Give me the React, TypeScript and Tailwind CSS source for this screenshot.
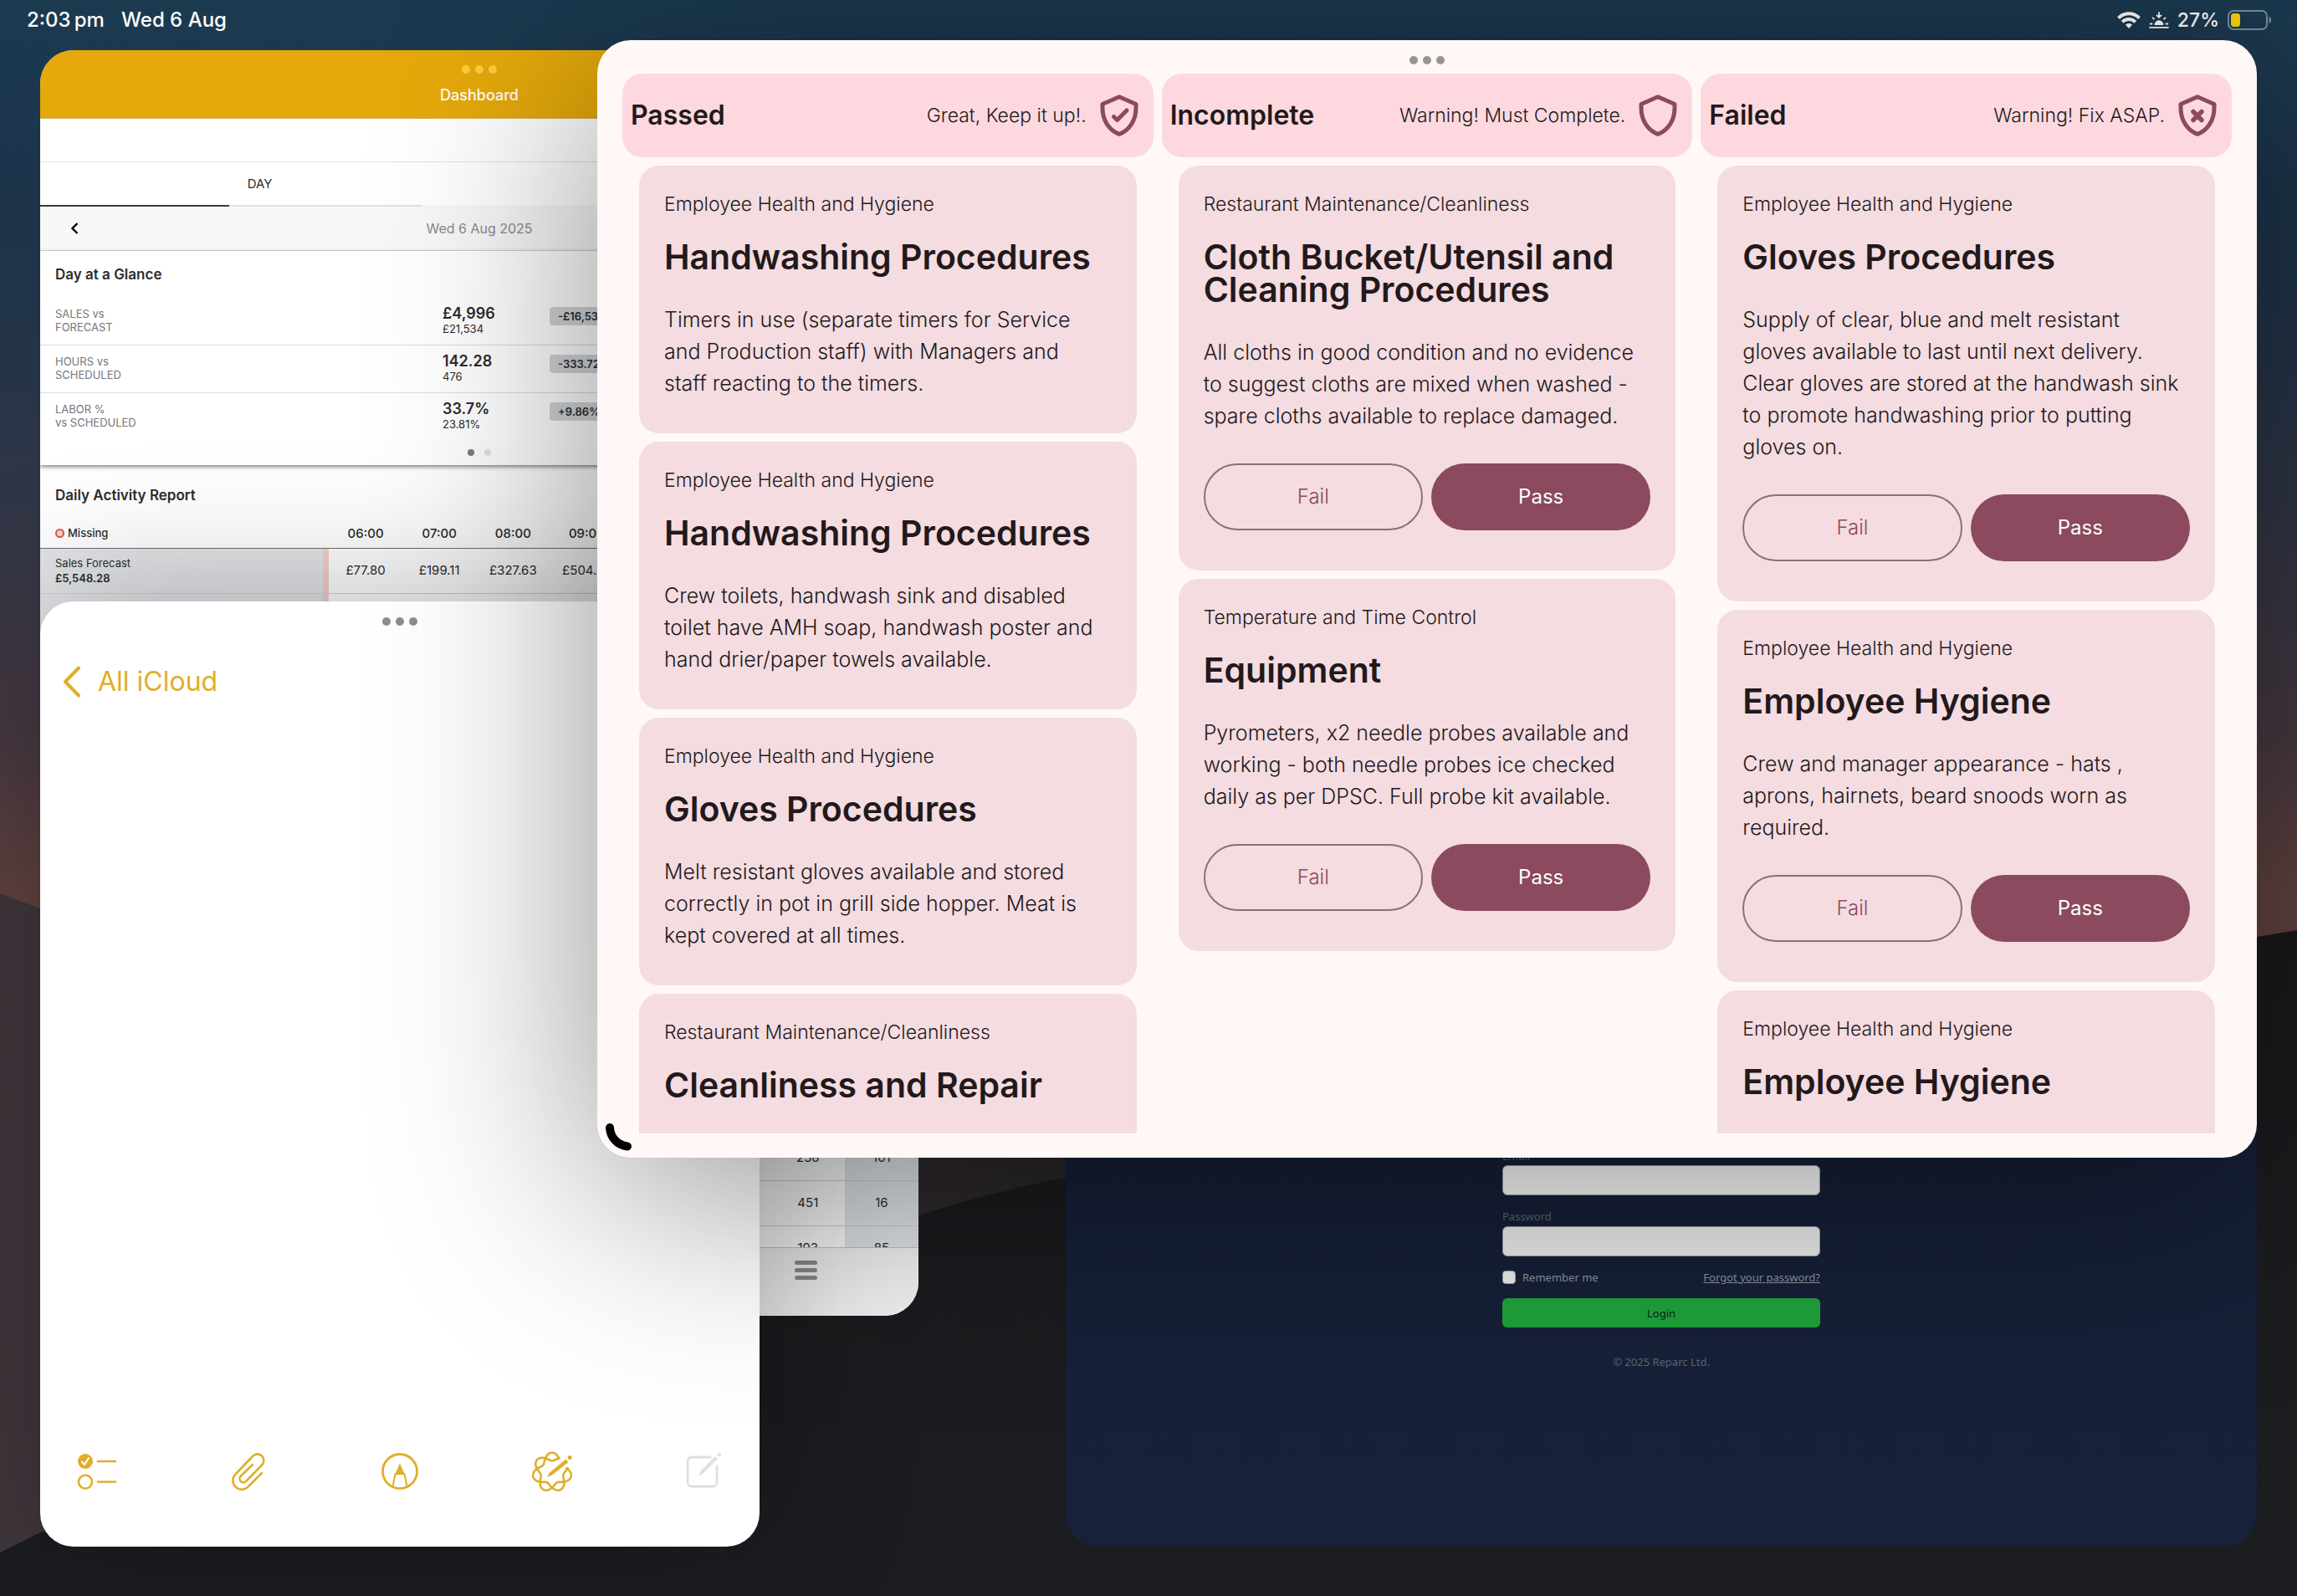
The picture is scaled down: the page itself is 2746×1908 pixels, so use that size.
import React from "react";

type Task = { area: string; title: string; body: string };
type ColumnData = {
  name: string;
  note: string;
  mark: "check" | "none" | "cross";
  actions: boolean;
  tasks: Task[];
};

const columns: ColumnData[] = [
  {
    name: "Passed",
    note: "Great, Keep it up!.",
    mark: "check",
    actions: false,
    tasks: [
      {
        area: "Employee Health and Hygiene",
        title: "Handwashing Procedures",
        body: "Timers in use (separate timers for Service\nand Production staff) with Managers and\nstaff reacting to the timers.",
      },
      {
        area: "Employee Health and Hygiene",
        title: "Handwashing Procedures",
        body: "Crew toilets, handwash sink and disabled\ntoilet have AMH soap, handwash poster and\nhand drier/paper towels available.",
      },
      {
        area: "Employee Health and Hygiene",
        title: "Gloves Procedures",
        body: "Melt resistant gloves available and stored\ncorrectly in pot in grill side hopper. Meat is\nkept covered at all times.",
      },
      {
        area: "Restaurant Maintenance/Cleanliness",
        title: "Cleanliness and Repair",
        body: "",
      },
    ],
  },
  {
    name: "Incomplete",
    note: "Warning! Must Complete.",
    mark: "none",
    actions: true,
    tasks: [
      {
        area: "Restaurant Maintenance/Cleanliness",
        title: "Cloth Bucket/Utensil and Cleaning Procedures",
        body: "All cloths in good condition and no evidence\nto suggest cloths are mixed when washed -\nspare cloths available to replace damaged.",
      },
      {
        area: "Temperature and Time Control",
        title: "Equipment",
        body: "Pyrometers, x2 needle probes available and\nworking - both needle probes ice checked\ndaily as per DPSC. Full probe kit available.",
      },
    ],
  },
  {
    name: "Failed",
    note: "Warning! Fix ASAP.",
    mark: "cross",
    actions: true,
    tasks: [
      {
        area: "Employee Health and Hygiene",
        title: "Gloves Procedures",
        body: "Supply of clear, blue and melt resistant\ngloves available to last until next delivery.\nClear gloves are stored at the handwash sink\nto promote handwashing prior to putting\ngloves on.",
      },
      {
        area: "Employee Health and Hygiene",
        title: "Employee Hygiene",
        body: "Crew and manager appearance - hats ,\naprons, hairnets, beard snoods worn as\nrequired.",
      },
      {
        area: "Employee Health and Hygiene",
        title: "Employee Hygiene",
        body: "",
      },
    ],
  },
];

const glance = [
  { top: "SALES vs", bottom: "FORECAST", value: "£4,996", base: "£21,534", delta: "-£16,538" },
  { top: "HOURS vs", bottom: "SCHEDULED", value: "142.28", base: "476", delta: "-333.72" },
  { top: "LABOR %", bottom: "vs SCHEDULED", value: "33.7%", base: "23.81%", delta: "+9.86%" },
];

const hours = ["06:00", "07:00", "08:00", "09:00", "", "", "", ""];

type ReportRow = { label: string; total: string; cells: string[] };
const blank: ReportRow = { label: "", total: "", cells: ["", "", "", "", "", "", "", ""] };
const reportRows: ReportRow[] = [
  {
    label: "Sales Forecast",
    total: "£5,548.28",
    cells: ["£77.80", "£199.11", "£327.63", "£504.97", "", "", "", ""],
  },
  ...Array.from({ length: 12 }, () => blank),
  { ...blank, cells: ["", "", "", "", "", "", "258", "101"] },
  { ...blank, cells: ["", "", "", "", "", "", "451", "16"] },
  { ...blank, cells: ["", "", "", "", "", "", "193", "85"] },
];

function Wallpaper() {
  return (
    <svg
      className="absolute inset-0 h-full w-full"
      viewBox="0 0 2746 1908"
      preserveAspectRatio="none"
      aria-hidden="true"
    >
      <defs>
        <linearGradient id="sky" x1="0" y1="0" x2="0" y2="1">
          <stop offset="0" stopColor="#1b3a50" />
          <stop offset="0.12" stopColor="#1d344b" />
          <stop offset="0.22" stopColor="#243448" />
          <stop offset="0.34" stopColor="#343645" />
          <stop offset="0.46" stopColor="#473942" />
          <stop offset="0.56" stopColor="#624340" />
          <stop offset="0.6" stopColor="#624340" />
        </linearGradient>
        <linearGradient id="farRidge" x1="0" y1="0" x2="1" y2="0">
          <stop offset="0" stopColor="#40373d" />
          <stop offset="0.45" stopColor="#2b272b" />
          <stop offset="1" stopColor="#242226" />
        </linearGradient>
        <linearGradient id="nearRidge" x1="0" y1="0" x2="0" y2="1">
          <stop offset="0" stopColor="#1a1a1d" />
          <stop offset="1" stopColor="#1c1d20" />
        </linearGradient>
      </defs>
      <rect width="2746" height="1908" fill="url(#sky)" />
      <path d="M0 1068 L48 1086 C500 1250 900 1290 1300 1290 L2746 1190 V1908 H0 Z" fill="url(#farRidge)" />
      <path
        d="M0 1856 L48 1832 C300 1740 800 1560 1098 1453 C1150 1436 1220 1418 1274 1408 C1800 1290 2300 1150 2698 1120 L2746 1112 V1908 H0 Z"
        fill="url(#nearRidge)"
      />
    </svg>
  );
}

function StatusBar() {
  return (
    <header className="relative flex h-12 items-center justify-between pl-8 pr-[30px] text-2xl font-medium text-white">
      <div className="flex items-center gap-5">
        <span>2:03&#8201;pm</span>
        <span>Wed 6 Aug</span>
      </div>
      <div className="flex items-center gap-2.5 text-[23px]">
        <svg className="h-5 w-7" viewBox="0 0 28 20" aria-label="Wi-Fi">
          <g fill="none" stroke="#fff" strokeWidth="4">
            <path d="M1.5 7.6 C8.5 0.6 19.5 0.6 26.5 7.6" />
            <path d="M6.2 12.2 C10.6 7.9 17.4 7.9 21.8 12.2" />
          </g>
          <path d="M14 20 L9.8 15.6 C12.2 13.4 15.8 13.4 18.2 15.6 Z" fill="#fff" />
        </svg>
        <svg className="h-5 w-6" viewBox="0 0 24 20" aria-label="Wind down">
          <g fill="none" stroke="#fff" strokeWidth="1.8" strokeLinecap="round" strokeLinejoin="round">
            <path d="M12 1 V6.5 M9.5 4.4 L12 6.8 L14.5 4.4" />
            <path d="M4.6 7.4 L5.9 8.7 M19.4 7.4 L18.1 8.7 M1.6 14.5 H3.6 M20.4 14.5 H22.4" />
            <path d="M1 18.8 H23" />
          </g>
          <path d="M6.5 16 A5.5 5.8 0 0 1 17.5 16 Z" fill="#fff" />
        </svg>
        <span>27%</span>
        <svg className="h-6 w-[53px]" viewBox="0 0 53 24" aria-label="Battery">
          <rect x="1" y="1" width="46" height="22" rx="6" fill="none" stroke="#7b8d9b" strokeWidth="2" />
          <rect x="4" y="4" width="11" height="16" rx="3.5" fill="#fcd20a" />
          <path d="M49.5 8 C53 9 53 15 49.5 16 Z" fill="#7b8d9b" />
        </svg>
      </div>
    </header>
  );
}

function Grabber({ tone }: { tone: string }) {
  return (
    <div className="flex justify-center gap-1.5" aria-hidden="true">
      <span className={`size-2.5 rounded-full ${tone}`} />
      <span className={`size-2.5 rounded-full ${tone}`} />
      <span className={`size-2.5 rounded-full ${tone}`} />
    </div>
  );
}

function DashboardWindow() {
  return (
    <section className="absolute bottom-[335px] left-12 top-[60px] flex w-[1050px] flex-col overflow-hidden rounded-[40px] bg-white text-[#2c2c2e]">
      <div className="flex h-[82px] shrink-0 flex-col gap-3.5 border-b border-[#cfae5c] bg-[#e5a90b] pt-[18px]">
        <Grabber tone="bg-[#ffcb3d]" />
        <h1 className="text-center text-lg leading-6 font-medium text-white">Dashboard</h1>
      </div>
      <div className="h-[52px] shrink-0 border-b border-[#e2e2e4]" />
      <div className="flex h-[53px] shrink-0 border-b border-[#f4f4f5]">
        <button type="button" className="h-[53px] w-1/2 border-b-2 border-[#3a3a3c] pt-0.5 text-[15px] text-[#2c2c2e] [border-image:linear-gradient(to_right,#3a3a3c_43%,#e2e2e4_43%,#e2e2e4_87%,transparent_87%)_1]">
          DAY
        </button>
      </div>
      <div className="relative flex h-[53px] shrink-0 items-center justify-center border-b border-[#dededf] bg-[#f8f8f9] text-base text-[#8a8a8e]">
        <button type="button" aria-label="Previous day" className="absolute left-9">
          <svg className="h-3.5 w-2.5" viewBox="0 0 10 14" fill="none" stroke="#000" strokeWidth="2.4">
            <path d="M8.5 1 L2.5 7 L8.5 13" />
          </svg>
        </button>
        Wed 6 Aug 2025
      </div>

      <div className="relative flex h-[256px] shrink-0 flex-col bg-white shadow-[0_2px_5px_rgba(0,0,0,0.5)]">
        <h2 className="px-[18px] pt-4 text-[17px] leading-6 font-semibold">Day at a Glance</h2>
        <div className="mt-4">
          {glance.map((row) => (
            <div
              key={row.top}
              className="flex h-[57px] items-start border-b border-[#dcdcde] px-[18px] pt-[9px] last:border-b-0"
            >
              <p className="w-[463px] pt-0.5 text-[13px] leading-4 text-[#75757a]">
                {row.top}
                <br />
                {row.bottom}
              </p>
              <div className="w-32">
                <p className="text-lg leading-5 font-semibold">{row.value}</p>
                <p className="text-[13px] leading-4">{row.base}</p>
              </div>
              <p className="mt-0.5 rounded bg-[#d2d6da] px-2.5 text-[13px] leading-[22px] font-semibold">{row.delta}</p>
            </div>
          ))}
        </div>
        <div className="flex justify-center gap-3 pt-2.5">
          <span className="size-2 rounded-full bg-[#7f7f80]" />
          <span className="size-2 rounded-full bg-[#e3e3e6]" />
        </div>
      </div>

      <div className="mt-[7px] flex min-h-0 flex-1 flex-col overflow-hidden bg-white">
        <h2 className="px-[18px] pt-[17px] text-[17px] leading-6 font-semibold">Daily Activity Report</h2>
        <table className="mt-[17px] w-full table-fixed border-collapse text-[15px]">
          <thead>
            <tr className="h-[34px] border-b border-[#6c6d6e]">
              <th className="w-[345px] pl-[18px] text-left text-[13px] font-medium">
                <span className="flex items-center gap-1">
                  <span className="size-[11px] rounded-full border-2 border-[#e5544b] bg-[#f9d5d3]" />
                  Missing
                </span>
              </th>
              {hours.map((h, i) => (
                <th key={i} className="font-medium">
                  {h}
                </th>
              ))}
            </tr>
          </thead>
          <tbody>
            {reportRows.map((row, i) => (
              <tr key={i} className="h-[54px] border-b border-[#d2d3d4]">
                <th className="bg-[#e3e5e8] pl-[18px] text-left text-[13px] leading-[18px] font-normal shadow-[inset_-7px_0_0_#f3cfcd]">
                  {row.label}
                  <br />
                  <span className="font-semibold">{row.total}</span>
                </th>
                {row.cells.map((c, j) => (
                  <td key={j} className="text-center last:bg-[#e3e7eb]">
                    {c}
                  </td>
                ))}
              </tr>
            ))}
          </tbody>
        </table>
      </div>

      <div className="flex h-[82px] shrink-0 border-t border-[#c5c6c8] bg-[#f4f4f4] pt-[15px]">
        <button type="button" aria-label="Menu" className="ml-auto mr-[121px] flex h-6 flex-col gap-1">
          <span className="h-[5px] w-[27px] rounded-sm bg-[#8e8e90]" />
          <span className="h-[5px] w-[27px] rounded-sm bg-[#8e8e90]" />
          <span className="h-[5px] w-[27px] rounded-sm bg-[#8e8e90]" />
        </button>
      </div>
    </section>
  );
}

/* Seven interlaced lobes traced as r = R + a·cos(3.5θ) over two turns, open at the upper right. */
function rosettePath() {
  let d = "";
  let open = false;
  for (let deg = 15; deg <= 735; deg += 3) {
    const turn = deg % 360;
    if (turn > 15 && turn < 63) {
      open = false;
      continue;
    }
    const r = 18.5 + 4.8 * Math.cos((3.5 * (deg - 90) * Math.PI) / 180);
    const x = 24 + r * Math.cos((deg * Math.PI) / 180);
    const y = 25 - r * Math.sin((deg * Math.PI) / 180);
    d += `${open ? "L" : "M"}${x.toFixed(1)} ${y.toFixed(1)} `;
    open = true;
  }
  return d;
}

function NotesWindow() {
  const iconButton = "flex h-12 items-center justify-center";
  return (
    <section className="absolute bottom-[59px] left-12 top-[719px] flex w-[860px] flex-col justify-between overflow-hidden rounded-[40px] bg-white pt-[19px] shadow-[0_0_180px_rgba(0,0,0,0.3)]">
      <div>
        <Grabber tone="bg-[#8e8e8e]" />
        <button type="button" className="ml-[26px] mt-[47px] flex items-center gap-[19px] text-[32px] leading-10 text-[#dfae2b]">
          <svg className="h-10 w-6" viewBox="0 0 24 40" fill="none" stroke="#dfae2b" strokeWidth="4" strokeLinecap="round" strokeLinejoin="round">
            <path d="M20 3.5 L4 20 L20 36.5" />
          </svg>
          All iCloud
        </button>
      </div>
      <div className="flex items-center justify-between px-[43px] pb-[66px] text-[#dfae2b]">
        <button type="button" aria-label="Checklist" className={iconButton}>
          <svg className="size-12" viewBox="0 0 48 48" fill="none" stroke="currentColor" strokeWidth="2.6" strokeLinecap="round" strokeLinejoin="round">
            <circle cx="11" cy="12" r="9" fill="currentColor" stroke="none" />
            <path d="M7 12.5 L10 16 L15 8" stroke="#fff" strokeWidth="2" />
            <circle cx="11" cy="36.5" r="8" />
            <path d="M26 12 H48 M26 36.5 H48" />
          </svg>
        </button>
        <button type="button" aria-label="Attach" className={iconButton}>
          <svg className="size-12" viewBox="0 0 48 48" fill="none" stroke="currentColor" strokeWidth="2.6" strokeLinecap="round" strokeLinejoin="round">
            <path d="M40 26 L24 42 A10.5 10.5 0 0 1 8 28 L29 6 A7.6 7.6 0 0 1 40.5 16 L21.5 35.5 A4.3 4.3 0 0 1 14.5 30 L29 16" />
          </svg>
        </button>
        <button type="button" aria-label="Markup" className={iconButton}>
          <svg className="size-12" viewBox="0 0 48 48" fill="none" stroke="currentColor" strokeWidth="2.8" strokeLinejoin="round">
            <circle cx="24" cy="24" r="20.5" />
            <path d="M15.5 42 L18.5 27 H29.5 L32.5 42" strokeWidth="2" />
            <path d="M24 14.5 L29.8 27.5 H18.2 Z" fill="currentColor" stroke="none" />
          </svg>
        </button>
        <button type="button" aria-label="Writing tools" className={iconButton}>
          <svg className="size-12" viewBox="0 0 48 48" fill="none" stroke="currentColor" strokeWidth="2.6" strokeLinecap="round" strokeLinejoin="round">
            <path d={rosettePath()} />
            <path d="M18 31 L21 25.5 L40.5 9.5 L43.5 13 L24 28.5 Z" fill="currentColor" stroke="none" />
            <circle cx="45.2" cy="7.6" r="2.5" fill="currentColor" stroke="none" />
          </svg>
        </button>
        <button type="button" aria-label="New note" className={`${iconButton} text-[#e0e0e0]`}>
          <svg className="size-12" viewBox="0 0 48 48" fill="none" stroke="currentColor" strokeWidth="2.8" strokeLinecap="round" strokeLinejoin="round">
            <path d="M32 7 H10 A5 5 0 0 0 5 12 V37 A5 5 0 0 0 10 42 H35 A5 5 0 0 0 40 37 V18" />
            <path d="M18 29 L20.5 23.5 L38 6 L41 9 L23.5 26.5 Z" fill="currentColor" stroke="none" />
            <circle cx="43" cy="4" r="2.3" fill="currentColor" stroke="none" />
          </svg>
        </button>
      </div>
    </section>
  );
}

function LoginWindow() {
  return (
    <section className="absolute bottom-[59px] left-[1274px] right-12 top-[60px] flex flex-col items-center justify-end rounded-[40px] bg-linear-to-b from-[#141b2e] to-[#17213a] pb-[212px] font-['Noto_Sans'] text-[13px] leading-[18px] text-[#8b93a3]">
      <form className="flex w-[380px] flex-col">
        <label htmlFor="email" className="text-[#5c6577]">
          Email
        </label>
        <input id="email" type="email" className="mt-0.5 h-9 rounded-md border border-[#9aa0ad] bg-white" />
        <label htmlFor="password" className="mt-4 text-[#5c6577]">
          Password
        </label>
        <input id="password" type="password" className="mt-[3px] h-9 rounded-md border border-[#9aa0ad] bg-[#eeeeee]" />
        <div className="mt-4 flex items-center justify-between">
          <label className="flex items-center gap-2">
            <input type="checkbox" className="size-4 appearance-none rounded border border-[#9aa0ad] bg-[#ededed]" />
            Remember me
          </label>
          <a href="#forgot" className="underline">
            Forgot your password?
          </a>
        </div>
        <button type="button" className="mt-4 h-[35px] rounded-md bg-[#1fa23b] text-[#0c2414]">
          Login
        </button>
        <p className="mt-8 text-center text-[#5c6577]">© 2025 Reparc Ltd.</p>
      </form>
    </section>
  );
}

function Shield({ mark }: { mark: ColumnData["mark"] }) {
  return (
    <svg className="h-[50px] w-[46px] shrink-0" viewBox="0 0 46 50" fill="none" stroke="#8b4a5d" strokeWidth="5" strokeLinejoin="round" strokeLinecap="round" aria-hidden="true">
      <path d="M23 2.8 L43 11.5 V16 C43 31 35 43 23 47.3 C11 43 3 31 3 16 V11.5 Z" />
      {mark === "check" && <path d="M16.5 26.5 L20.5 30.5 L32 19" />}
      {mark === "cross" && <path d="M18 20.5 L28 30.5 M28 20.5 L18 30.5" strokeWidth="5.5" />}
    </svg>
  );
}

function TaskCard({ task, actions }: { task: Task; actions: boolean }) {
  return (
    <article className={`rounded-3xl bg-[#f4dce1] px-[30px] pt-7 ${actions ? "pb-[47px]" : "pb-10"}`}>
      <p className="text-[23px] leading-9 font-light">{task.area}</p>
      <h3 className="mt-[26px] text-[41px] leading-[39px] font-semibold">{task.title}</h3>
      <p className="mt-9 min-h-[114px] text-[25px] leading-[38px] font-light whitespace-pre-line">{task.body}</p>
      {actions ? (
        <div className="mt-[38px] grid grid-cols-2 gap-2.5 pb-px text-2xl">
          <button type="button" className="h-20 rounded-full border-2 border-[#86727a] font-light text-[#8b4a5d]">
            Fail
          </button>
          <button type="button" className="h-20 rounded-full bg-[#8b4a5d] text-white">
            Pass
          </button>
        </div>
      ) : (
        <div className="h-px" />
      )}
    </article>
  );
}

function ChecksWindow() {
  return (
    <section className="absolute bottom-[524px] left-[714px] right-12 top-12 flex flex-col rounded-[40px] bg-[#fff8f7] px-[30px] pb-[29px] pt-[19px] text-[#22191b] shadow-[0_40px_260px_rgba(0,0,0,0.44)]">
      <Grabber tone="bg-[#989393]" />
      <div className="mt-[11px] grid min-h-0 flex-1 grid-cols-3 gap-2.5">
        {columns.map((col) => (
          <div key={col.name} className="flex min-h-0 flex-col">
            <div className="flex h-[100px] shrink-0 items-center gap-4 rounded-3xl bg-[#fdd9df] pl-2.5 pr-[18px]">
              <h2 className="text-[32px] leading-10 font-semibold">{col.name}</h2>
              <p className="ml-auto text-[23px] font-light">{col.note}</p>
              <Shield mark={col.mark} />
            </div>
            <div className="mx-5 mt-2.5 flex min-h-0 flex-1 flex-col gap-2.5 overflow-hidden *:shrink-0">
              {col.tasks.map((task, i) => (
                <TaskCard key={i} task={task} actions={col.actions} />
              ))}
            </div>
          </div>
        ))}
      </div>
      <svg className="absolute bottom-1.5 left-2 h-9 w-9" viewBox="0 0 36 36" fill="none" stroke="#000" strokeWidth="10" strokeLinecap="round" aria-hidden="true">
        <path d="M7 6 C7.5 17 15 26.5 28 28.5" />
      </svg>
    </section>
  );
}

export default function App() {
  return (
    <main className="relative h-screen w-full overflow-hidden bg-[#1a1a1d] font-['Inter',sans-serif]">
      <Wallpaper />
      <StatusBar />
      <LoginWindow />
      <DashboardWindow />
      <NotesWindow />
      <ChecksWindow />
    </main>
  );
}
